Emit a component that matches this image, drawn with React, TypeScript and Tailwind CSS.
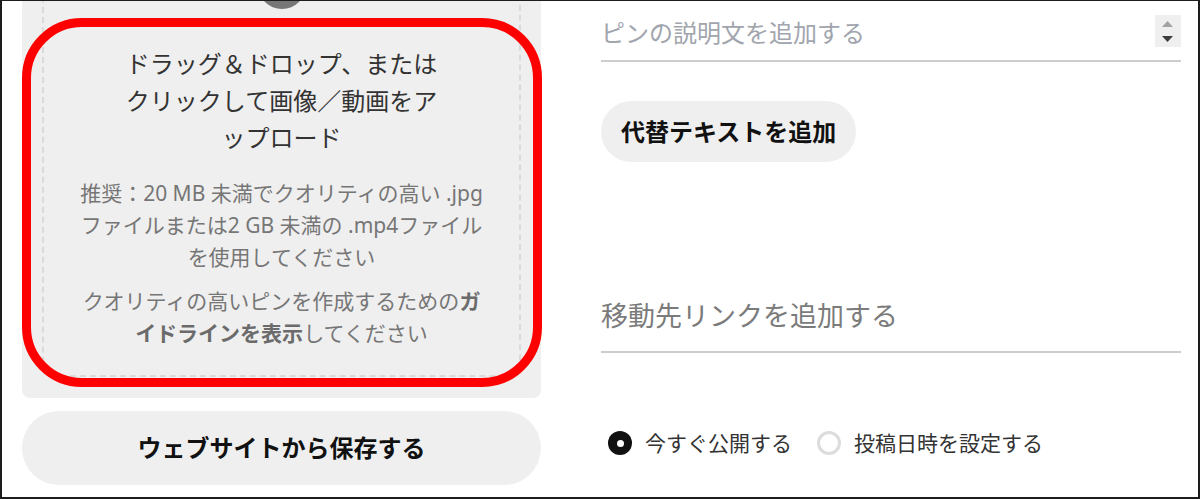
import React from "react";

const font = { fontFamily: '"Noto Sans", "Noto Sans CJK JP", sans-serif' };

function Spinner() {
  return (
    <div className="w-[26px] h-[32px] mt-[14px] bg-[#efefef] shrink-0">
      <svg width="26" height="32" viewBox="0 0 26 32">
        <polygon points="7,12 18,12 12.5,6" fill="#a3a3a3" />
        <polygon points="7,21 18,21 12.5,27" fill="#3d3d3d" />
      </svg>
    </div>
  );
}

function Radio({ checked, label }: { checked?: boolean; label: string }) {
  return (
    <label className="flex items-center gap-[13px]">
      {checked ? (
        <span className="w-[24px] h-[24px] rounded-full bg-[#111] flex items-center justify-center">
          <span className="w-[7px] h-[7px] rounded-full bg-white" />
        </span>
      ) : (
        <span className="w-[24px] h-[24px] rounded-full border-[3px] border-[#dcdcdc] bg-white" />
      )}
      <span className="text-[21px] leading-[24px] text-[#333]">{label}</span>
    </label>
  );
}

export default function App() {
  return (
    <div
      className="relative w-[1200px] h-[499px] overflow-hidden bg-white border-[#1c1c1c] border-t-[1px] border-l-[2px] border-r-[2px] border-b-[2px]"
      style={font}
    >
      <div className="flex pl-[20px]">
        {/* left: upload area */}
        <div className="w-[519px] shrink-0">
          <div className="-mt-[101px] bg-[#efefef] rounded-[8px] p-[20px] pb-[21px]">
            <div className="border-2 border-dashed border-[#dadada] rounded-[16px] flex flex-col items-center pt-[39px] pb-[26px]">
              <div className="w-[48px] h-[48px] rounded-full bg-[#767676]" />
              <p className="mt-[36px] text-[24px] leading-[37px] text-[#333] text-center whitespace-nowrap">
                ドラッグ＆ドロップ、または
                <br />
                クリックして画像／動画をア
                <br />
                ップロード
              </p>
              <p className="mt-[21px] text-[21px] leading-[32px] text-[#767676] text-center whitespace-nowrap">
                推奨：20 MB 未満でクオリティの高い .jpg
                <br />
                ファイルまたは2 GB 未満の .mp4ファイル
                <br />
                を使用してください
              </p>
              <p className="mt-[12px] text-[21px] leading-[32px] text-[#767676] text-center whitespace-nowrap">
                クオリティの高いピンを作成するための<b className="font-bold text-[#6b6b6b]">ガ</b>
                <br />
                <b className="font-bold text-[#6b6b6b]">イドラインを表示</b>してください
              </p>
            </div>
          </div>
          <button className="mt-[13px] w-full h-[74px] rounded-full bg-[#efefef] text-[24px] font-bold text-[#111]">
            ウェブサイトから保存する
          </button>
        </div>

        {/* right: form */}
        <div className="w-[580px] ml-[60px] shrink-0">
          <div className="h-[61px] border-b-2 border-[#cdcdcd] flex justify-between items-start">
            <span className="mt-[14px] text-[24px] leading-[36px] text-[#a1a5ad]">ピンの説明文を追加する</span>
            <Spinner />
          </div>
          <button className="mt-[39px] h-[61px] px-[20px] rounded-full bg-[#efefef] text-[24px] font-bold text-[#111]">
            代替テキストを追加
          </button>
          <div className="mt-[136px] pb-[17px] border-b-2 border-[#cdcdcd]">
            <span className="block text-[27px] leading-[36px] text-[#7b7b7b]">移動先リンクを追加する</span>
          </div>
          <div className="mt-[78px] pl-[7px] flex items-center gap-[25px]">
            <Radio checked label="今すぐ公開する" />
            <Radio label="投稿日時を設定する" />
          </div>
        </div>
      </div>

      {/* annotation ring */}
      <div className="absolute left-[20px] top-[17px] w-[520px] h-[369px] border-[9px] border-[#ff0000] rounded-[60px] pointer-events-none" />
    </div>
  );
}
